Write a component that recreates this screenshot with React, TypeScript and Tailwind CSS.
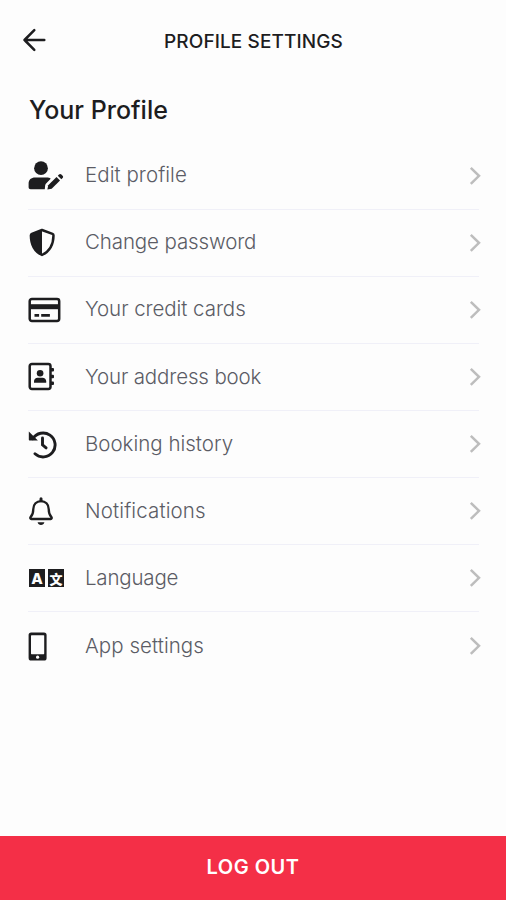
import type { ReactNode } from 'react'

interface MenuItem {
  label: string;
  icon: ReactNode;
  spacing: string;
}

function UserEditIcon() {
  return (
    <svg className="w-[36px] h-[29px]" viewBox="0 0 36 29" fill="currentColor">
      <circle cx="13" cy="7.2" r="6.9" />
      <path d="M0.6 26.2v-3.4c0-4 2.6-6.2 6.5-6.2h11.4c1.9 0 3.1.2 4.2 1.2l-4.6 4.7c-.7.8-.9 1.5-1 2.5l-.3 3.2H2.6c-1.2 0-2-.8-2-2z" />
      <path d="M20.2 24.2l8.3-8.2 3.5 3.5-8.3 8.2-4.3.9z" />
      <path d="M29.8 14.7l1.2-1.2c.7-.7 1.7-.7 2.4 0l1.2 1.2c.7.7.7 1.7 0 2.4l-1.3 1.2z" />
    </svg>
  )
}

function ShieldIcon() {
  return (
    <svg className="w-[28px] h-[29px]" viewBox="0 0 28 29" fill="none" stroke="currentColor" strokeWidth="2.5" strokeLinejoin="round">
      <path d="M14 2L3.9 5.9c-.7.3-1 .8-1 1.5.1 9.500 3.7 16 11.100 19.600 7.400-3.600 11.400-10.100 11.500-19.600 0-.7-.3-1.200-1-1.500z" />
      <path d="M14 2L3.900 5.900c-.7.3-1 .8-1 1.500.1 9.500 3.700 16 11.100 19.600z" fill="currentColor" stroke="none" />
    </svg>
  )
}

function CardIcon() {
  return (
    <svg className="w-[33px] h-[26px]" viewBox="0 0 33 26" fill="none" stroke="currentColor" strokeWidth="2.5">
      <rect x="1.7" y="2" width="29.5" height="22" rx="2.2" />
      <path d="M2 9.7h29" strokeWidth="5" />
      <path d="M6.5 18.4h4.6M13.200 18.4h8.700" strokeWidth="2.9" />
    </svg>
  )
}

function AddressBookIcon() {
  return (
    <svg className="w-[28px] h-[29px]" viewBox="0 0 28 29" fill="currentColor">
      <rect x="1.700" y="2" width="20.8" height="25" rx="2.2" fill="none" stroke="currentColor" strokeWidth="2.500" />
      <rect x="22" y="6" width="4" height="3.4" rx="1" />
      <rect x="22" y="12.8" width="4" height="3.4" rx="1" />
      <rect x="22" y="19.6" width="4" height="3.4" rx="1" />
      <circle cx="12.1" cy="11.2" r="3.300" />
      <path d="M6 20.8v-1.3c0-2.200 1.600-3.700 3.600-3.700h5c2 0 3.600 1.500 3.600 3.700v1.300z" />
    </svg>
  )
}

function HistoryIcon() {
  return (
    <svg className="w-[29px] h-[29px]" viewBox="0 0 29 29" fill="none" stroke="currentColor" strokeWidth="2.9">
      <path d="M4.8 8.8A12 12 0 1 1 7 23.8" strokeLinecap="round" />
      <path d="M14.500 8v6.9l3.600 3" strokeLinecap="round" />
      <path d="M0.800 1.500l9.100 9.100H1.800c-.6 0-1-.4-1-1z" fill="currentColor" stroke="none" />
    </svg>
  )
}

function BellIcon() {
  return (
    <svg className="w-[27px] h-[29px]" viewBox="0 0 27 29" fill="none" stroke="currentColor" strokeWidth="2.300">
      <path d="M13 1.8v2" strokeWidth="3" strokeLinecap="round" />
      <path d="M13 4.1c-4.5 0-7.7 3.2-7.7 7.8 0 4.6-1 6.4-2.7 8.2-.6.7-.3 1.9.7 1.9h19.4c1 0 1.3-1.2.7-1.9-1.700-1.8-2.7-3.6-2.7-8.2 0-4.6-3.2-7.8-7.7-7.8z" />
      <path d="M9.6 25.3h6.8c-.4 1.8-1.7 2.8-3.4 2.8s-3-1-3.4-2.8z" fill="currentColor" stroke="none" />
    </svg>
  )
}

function LanguageIcon() {
  return (
    <div className="pl-px flex gap-[3px] text-[#fdfdfd] leading-none">
      <span className="w-[16px] h-[18px] bg-[#1d1d1f] flex items-center justify-center text-[15px] font-extrabold">A</span>
      <span className="w-[16px] h-[18px] bg-[#1d1d1f] flex items-center justify-center text-[13px] font-black font-['Noto_Sans_CJK_SC',sans-serif]">文</span>
    </div>
  )
}

function PhoneIcon() {
  return (
    <svg className="w-[20px] h-[29px]" viewBox="0 0 20 29">
      <rect x="0.6" y="0.5" width="18" height="28" rx="2.6" fill="currentColor" />
      <rect x="3" y="3.2" width="13.2" height="19" rx="0.6" fill="#fdfdfd" />
      <circle cx="9.6" cy="25.2" r="1.6" fill="#fdfdfd" />
    </svg>
  )
}

const items: MenuItem[] = [
  { label: 'Edit profile', icon: <UserEditIcon />, spacing: 'tracking-[0.05px]' },
  { label: 'Change password', icon: <ShieldIcon />, spacing: 'tracking-[-0.12px]' },
  { label: 'Your credit cards', icon: <CardIcon />, spacing: 'tracking-[-0.06px]' },
  { label: 'Your address book', icon: <AddressBookIcon />, spacing: 'tracking-[-0.14px]' },
  { label: 'Booking history', icon: <HistoryIcon />, spacing: 'tracking-normal' },
  { label: 'Notifications', icon: <BellIcon />, spacing: 'tracking-[0.13px]' },
  { label: 'Language', icon: <LanguageIcon />, spacing: 'tracking-[-0.2px]' },
  { label: 'App settings', icon: <PhoneIcon />, spacing: 'tracking-[0.05px]' },
]

export default function App() {
  return (
    <div className="h-[900px] bg-[#fdfdfd] flex flex-col font-['Inter',sans-serif] text-[#1d1d1f]">
      {/* Top bar */}
      <header className="h-[82px] grid grid-cols-[60px_1fr_60px] items-center">
        <button aria-label="Back" className="pl-[22px] pb-[2px]">
          <svg className="w-[24px] h-[24px]" viewBox="0 0 24 24" fill="none" stroke="currentColor" strokeWidth="2.5" strokeLinecap="round" strokeLinejoin="round">
            <path d="M22.3 12H2.5M12.3 2.2L2.5 12l9.8 9.8" />
          </svg>
        </button>
        <h1 className="pl-px pt-[2px] text-center text-[19px] font-medium tracking-[0.1px] whitespace-nowrap">PROFILE SETTINGS</h1>
      </header>

      <main className="flex-1 pl-[28px] pr-[25px]">
        <h2 className="h-[60.5px] pl-px pt-[10px] text-[25px] leading-[36px] font-medium">Your Profile</h2>
        {/* Menu list */}
        <ul>
          {items.map((item) => (
            <li key={item.label} className="h-[67.15px] flex items-center border-b border-[#f0f0f8] last:border-b-0 mr-[2px]">
              <span className="w-[57px] flex shrink-0">{item.icon}</span>
              <span className={`flex-1 text-[20.5px] font-[350] text-[#5b5c65] ${item.spacing}`}>{item.label}</span>
              <svg className="w-[12px] h-[20px] -mr-[2px]" viewBox="0 0 12 20" fill="none" stroke="#bdbdbd" strokeWidth="2.5">
                <path d="M1.8 1.8l8.2 8-8.2 8" />
              </svg>
            </li>
          ))}
        </ul>
      </main>

      <button className="h-[64px] bg-[#f42f47] text-white text-[20px] font-semibold tracking-[0.5px] pb-[2px]">LOG OUT</button>
    </div>
  )
}
